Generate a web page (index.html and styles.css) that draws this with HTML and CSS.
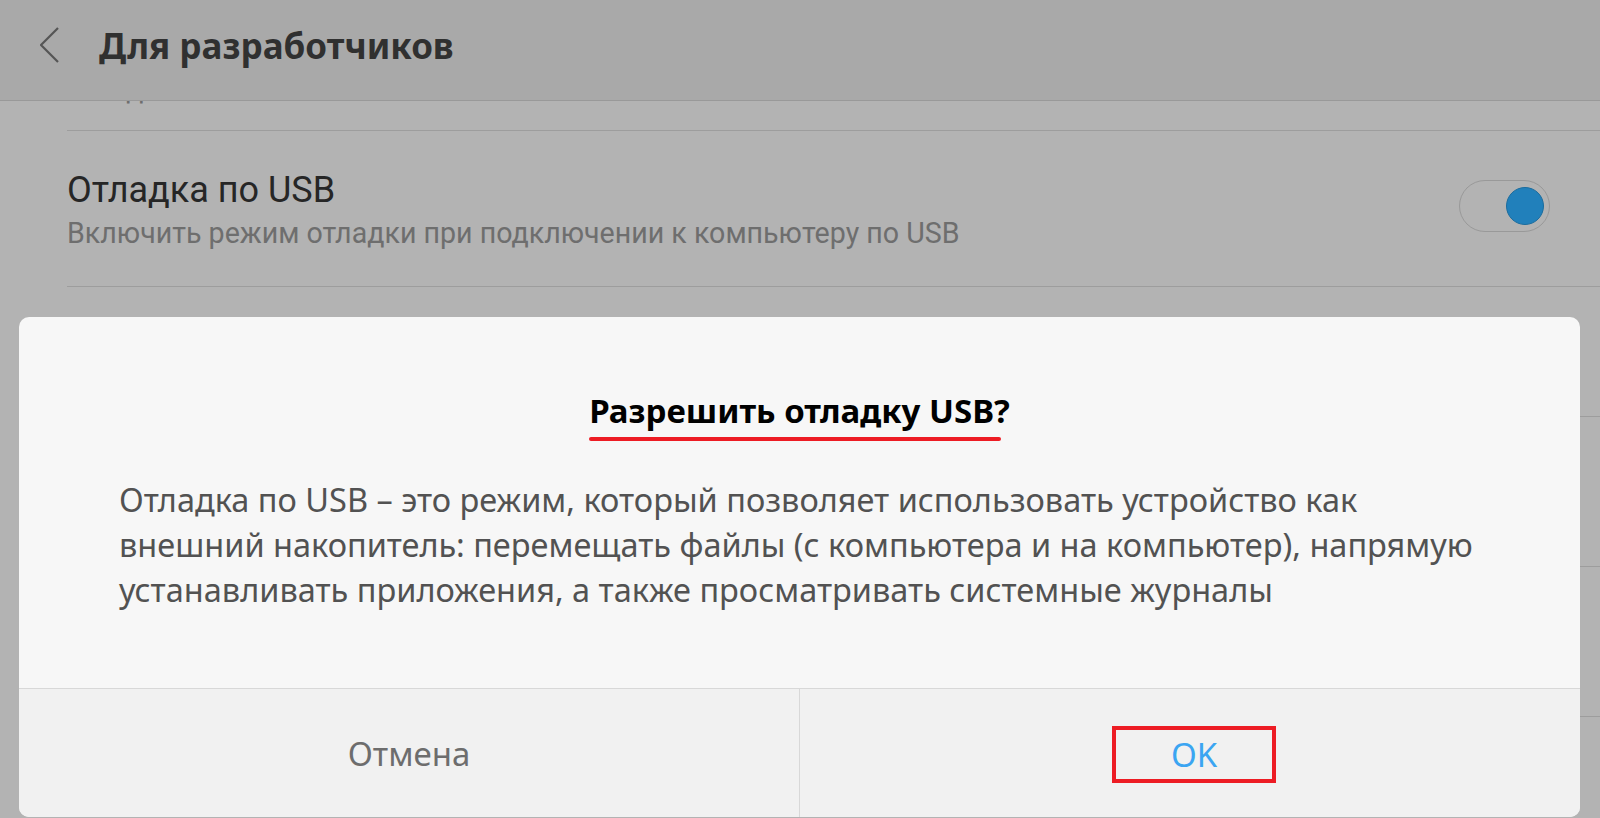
FILE: index.html
```html
<!DOCTYPE html>
<html lang="ru">

<head>
    <meta charset="UTF-8">
    <meta name="viewport" content="width=device-width, initial-scale=1.0">
    <title>Для разработчиков</title>
    <link rel="stylesheet" href="styles.css">
</head>

<body>

    <header class="topbar">
        <svg class="back" width="20" height="36" viewBox="0 0 20 36">
            <polyline points="18,1 1,18 18,35" fill="none" stroke="#555" stroke-width="2.2" />
        </svg>
        <h1>Для разработчиков</h1>
    </header>

    <div class="list">
        <div class="row row-prev">
            <p class="row-sub">Всегда включено</p>
        </div>
        <div class="row row-main">
            <div class="row-text">
                <p class="row-title">Отладка по USB</p>
                <p class="row-sub">Включить режим отладки при подключении к компьютеру по USB</p>
            </div>
            <div class="switch on"><span class="knob"></span></div>
        </div>
        <!-- rows hidden under the dialog, only their dividers show -->
        <div class="row row-short"></div>
        <div class="row"></div>
        <div class="row"></div>
    </div>

    <!-- dialog over the settings list -->
    <div class="dialog">
        <div class="dialog-body">
            <div class="dialog-head">
                <h2>Разрешить отладку USB?</h2>
                <div class="mark"></div>
            </div>
            <p class="dialog-text">
                Отладка по USB – это режим, который позволяет использовать устройство как<br>
                внешний накопитель: перемещать файлы (с компьютера и на компьютер), напрямую<br>
                устанавливать приложения, а также просматривать системные журналы
            </p>
        </div>
        <div class="dialog-buttons">
            <button class="btn btn-cancel">Отмена</button>
            <button class="btn btn-ok"><span class="ok-frame">OK</span></button>
        </div>
    </div>

</body>

</html>
```

FILE: styles.css
```css
body {
    margin: 0;
    height: 818px;
    overflow: hidden;
    background-color: #b3b3b3;
    font-family: Roboto, "Noto Sans", sans-serif;
}

p {
    margin: 0;
}

/* Top bar */

.topbar {
    position: fixed;
    top: 0;
    left: 0;
    right: 0;
    z-index: 2;
    height: 100px;
    display: flex;
    align-items: center;
    background-color: #a9a9a9;
    border-bottom: 1px solid #999;
}

.back {
    margin-left: 40px;
    margin-top: -10px;
}

.topbar h1 {
    margin: -10px 0 0 39px;
    font-family: "Noto Sans", Roboto, sans-serif;
    font-size: 35px;
    font-weight: bold;
    color: #303030;
}

/* Settings list */

.list {
    padding-top: 72px;
}

.row {
    margin-left: 67px;
    height: 150px;
    display: flex;
    align-items: center;
    border-bottom: 1px solid #9d9d9d;
    box-sizing: border-box;
}

.row-prev {
    height: 59px;
    align-items: flex-start;
}

.row-main {
    height: 156px;
    justify-content: space-between;
    padding-right: 50px;
}

.row-short {
    height: 130px;
}

.row-text {
    margin-top: 2px;
}

.row-title {
    font-size: 36px;
    line-height: 40px;
    color: #262626;
}

.row-sub {
    margin-top: 6px;
    font-size: 28.6px;
    line-height: 34px;
    color: #6e6e6e;
}

.row-prev .row-sub {
    margin-top: 0;
}

.switch {
    width: 84px;
    height: 50px;
    border: 1.5px solid #999;
    border-radius: 27px;
    display: flex;
    align-items: center;
    justify-content: flex-end;
    padding-right: 5px;
    margin-top: -5px;
}

.knob {
    width: 36px;
    height: 36px;
    border-radius: 50%;
    background-color: #2180bb;
    border: 1px solid #1a6c9e;
}

/* Dialog */

.dialog {
    position: absolute;
    left: 19px;
    right: 20px;
    top: 317px;
    bottom: 1px;
    z-index: 3;
    display: flex;
    flex-direction: column;
    background-color: #f7f7f7;
    border-radius: 10px;
    overflow: hidden;
    font-family: "Noto Sans", Roboto, sans-serif;
}

.dialog-body {
    flex: 1;
    padding: 72px 100px 0;
}

.dialog-head {
    display: flex;
    flex-direction: column;
    align-items: center;
}

.dialog-head h2 {
    margin: 0;
    font-size: 33px;
    line-height: 44px;
    font-weight: bold;
    color: #000;
}

.mark {
    width: 412px;
    height: 4px;
    margin: 4px 9px 0 0;
    border-radius: 2px;
    background-color: #ed1c24;
}

.dialog-text {
    margin-top: 36px;
    font-size: 32.5px;
    line-height: 45px;
    color: #525252;
    white-space: nowrap;
}

.dialog-buttons {
    height: 128px;
    display: flex;
    border-top: 1px solid #d8d8d8;
    background-color: #f1f1f1;
}

.btn {
    flex: 1;
    border: none;
    background: none;
    font-family: inherit;
    font-size: 33px;
    padding: 0;
}

.btn + .btn {
    border-left: 1px solid #d8d8d8;
}

.btn-cancel {
    color: #6d6d6d;
}

.btn-ok {
    color: #3ba5f2;
}

.ok-frame {
    display: inline-block;
    width: 156px;
    height: 49px;
    line-height: 49px;
    margin: 2px 0 0 8px;
    border: 4px solid #ed1c24;
}
```
